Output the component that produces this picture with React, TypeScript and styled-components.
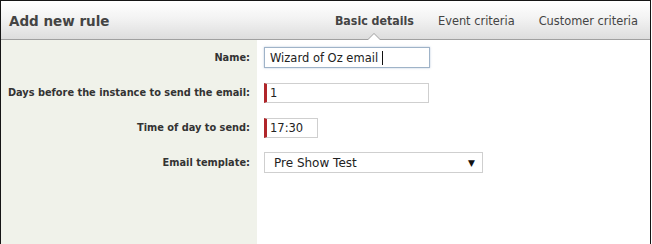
import React from 'react'
import styled, { createGlobalStyle } from 'styled-components'

const GlobalStyle = createGlobalStyle`
  html, body {
    margin: 0;
    padding: 0;
    background: #fff;
  }
  body {
    font-family: "DejaVu Sans", Verdana, sans-serif;
    color: #333;
  }
`

const tabs = ['Basic details', 'Event criteria', 'Customer criteria']

const fields = [
  { label: 'Name:', kind: 'name' },
  { label: 'Days before the instance to send the email:', kind: 'days' },
  { label: 'Time of day to send:', kind: 'time' },
  { label: 'Email template:', kind: 'template' },
]

const App: React.FC = () => {
  return (
    <>
      <GlobalStyle />
      <StyledFrame>
        <StyledHeader>
          <StyledTitle>Add new rule</StyledTitle>
          <StyledTabs>
            {tabs.map((tab, i) => (
              <StyledTab key={tab} active={i === 0}>{tab}</StyledTab>
            ))}
          </StyledTabs>
        </StyledHeader>
        <StyledBody>
          <StyledLabels>
            {fields.map(f => (
              <StyledLabelRow key={f.kind}>{f.label}</StyledLabelRow>
            ))}
          </StyledLabels>
          <StyledFields>
            <StyledFieldRow>
              <StyledInput width={166} focused>
                Wizard of Oz email
                <StyledCaret />
              </StyledInput>
            </StyledFieldRow>
            <StyledFieldRow>
              <StyledInput width={165} required>1</StyledInput>
            </StyledFieldRow>
            <StyledFieldRow>
              <StyledInput width={54} required>17:30</StyledInput>
            </StyledFieldRow>
            <StyledFieldRow>
              <StyledSelect>
                <span>Pre Show Test</span>
                <StyledArrow>▼</StyledArrow>
              </StyledSelect>
            </StyledFieldRow>
          </StyledFields>
        </StyledBody>
      </StyledFrame>
    </>
  )
}

const StyledFrame = styled.div`
  width: 651px;
  height: 244px;
  box-sizing: border-box;
  border: 1px solid #151515;
  border-bottom: none;
  display: flex;
  flex-direction: column;
  overflow: hidden;
`

const StyledHeader = styled.div`
  height: 38px;
  flex: none;
  display: flex;
  align-items: center;
  justify-content: space-between;
  padding: 0 12px 0 8px;
  background: linear-gradient(to bottom, #ffffff 0%, #f3f3f3 45%, #dddddd 100%);
  border-bottom: 1px solid #a0a0a0;
`

const StyledTitle = styled.div`
  font-size: 13.5px;
  font-weight: 700;
  color: #444;
  padding-top: 1px;
`

const StyledTabs = styled.div`
  display: flex;
  gap: 24px;
  align-self: stretch;
`

const StyledTab = styled.div<{ active?: boolean }>`
  position: relative;
  display: flex;
  align-items: center;
  font-family: ${props => (props.active ? '"DejaVu Sans Condensed", "DejaVu Sans", sans-serif' : '"DejaVu Sans", sans-serif')};
  font-size: ${props => (props.active ? 12.3 : 11.4)}px;
  font-weight: ${props => (props.active ? 700 : 400)};
  color: #444;
  padding-top: 1px;

  ${props =>
    props.active &&
    `
    &::before, &::after {
      content: '';
      position: absolute;
      left: 50%;
      width: 0;
      height: 0;
      border-style: solid;
    }
    &::before {
      bottom: -1px;
      margin-left: -7px;
      border-width: 0 7px 7px 7px;
      border-color: transparent transparent #a0a0a0 transparent;
    }
    &::after {
      bottom: -1px;
      margin-left: -6px;
      border-width: 0 6px 6px 6px;
      border-color: transparent transparent #ffffff transparent;
    }
  `}
`

const StyledBody = styled.div`
  flex: 1;
  display: flex;
`

const StyledLabels = styled.div`
  width: 256px;
  flex: none;
  background: #f0f2ea;
`

const StyledLabelRow = styled.div`
  height: 35px;
  display: flex;
  align-items: center;
  justify-content: flex-end;
  padding-right: 7px;
  font-family: "DejaVu Sans Condensed", "DejaVu Sans", sans-serif;
  font-size: 10.9px;
  font-weight: 700;
  color: #333;
  white-space: nowrap;
`

const StyledFields = styled.div`
  flex: 1;
  padding-left: 7px;
`

const StyledFieldRow = styled.div`
  height: 35px;
  display: flex;
  align-items: center;
`

const StyledInput = styled.div<{ width: number; focused?: boolean; required?: boolean }>`
  box-sizing: border-box;
  width: ${props => props.width}px;
  height: ${props => (props.focused ? 21 : 20)}px;
  display: flex;
  align-items: center;
  padding-left: ${props => (props.required ? 3 : 5)}px;
  font-size: 11.5px;
  color: #222;
  background: #fff;
  border: 1px solid ${props => (props.focused ? '#9fb3c8' : '#cfcfcf')};
  border-left: ${props => (props.required ? '3px solid #b0262a' : `1px solid ${props.focused ? '#9fb3c8' : '#cfcfcf'}`)};
  box-shadow: ${props => (props.focused ? '0 0 2px rgba(120, 150, 190, 0.5)' : 'none')};
  white-space: nowrap;
`

const StyledCaret = styled.span`
  display: inline-block;
  width: 1px;
  height: 14px;
  background: #111;
  margin-left: 4px;
`

const StyledSelect = styled.div`
  box-sizing: border-box;
  width: 219px;
  height: 21px;
  display: flex;
  align-items: center;
  justify-content: space-between;
  padding: 0 7px 0 9px;
  font-size: 12px;
  color: #222;
  background: #fff;
  border: 1px solid #cfcfcf;
`

const StyledArrow = styled.span`
  font-size: 9px;
  color: #111;
`

export default App
